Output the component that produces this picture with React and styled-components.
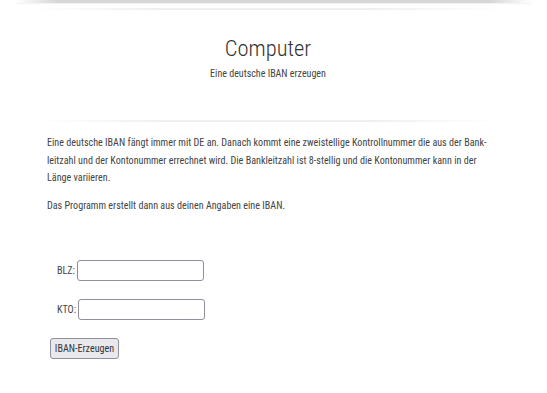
import React from "react";
import styled, { createGlobalStyle } from "styled-components";

const Global = createGlobalStyle`
  html, body { margin: 0; padding: 0; background: #fff; }
  body { font-family: "Roboto Condensed", Roboto, "Liberation Sans", sans-serif; color: #444; }
`;

const Page = styled.div`
  width: 547px;
  height: 393px;
  overflow: hidden;
  display: flex;
  flex-direction: column;
`;

const TopShade = styled.div`
  height: 3px;
  margin: 0 16px 0 16px;
  background: linear-gradient(to right, rgba(200,200,200,0), #d6d6d6 8%, #d6d6d6 92%, rgba(200,200,200,0));
  box-shadow: 0 1px 2px rgba(0,0,0,0.06);
`;

const Rule = styled.div`
  height: 2px;
  margin: ${(p) => p.$m || "0"};
  background: linear-gradient(to right, rgba(235,235,235,0), #eeeeee 30%, #eeeeee 70%, rgba(235,235,235,0));
`;

const Header = styled.header`
  display: flex;
  flex-direction: column;
  align-items: center;
  padding: 23px 11px 0 0;
  height: 102px;
  box-sizing: border-box;
`;

const Title = styled.h1`
  margin: 0;
  font-weight: 300;
  font-size: 22.5px;
  line-height: 30px;
  color: #333;
`;

const Subtitle = styled.p`
  margin: 4px 0 0;
  font-size: 10px;
  line-height: 14px;
  color: #444;
`;

const Content = styled.main`
  padding: 12px 0 0 47px;
`;

const Para = styled.p`
  margin: 0 0 10px;
  font-size: 10.1px;
  line-height: 17.5px;
  color: #444;
`;

const Form = styled.form`
  display: flex;
  flex-direction: column;
  gap: 18px;
  padding: 36px 0 0 3px;
`;

const Row = styled.label`
  display: flex;
  align-items: center;
  gap: 2px;
  padding-left: 7px;
  font-size: 10.1px;
  color: #444;
`;

const Input = styled.input`
  width: 127px;
  height: 21px;
  box-sizing: border-box;
  border: 1px solid #8f8f9d;
  border-radius: 3px;
  background: #fff;
  padding: 0 4px;
  font: inherit;
`;

const Button = styled.button`
  align-self: flex-start;
  width: 69px;
  height: 21px;
  box-sizing: border-box;
  border: 1px solid #8f8f9d;
  border-radius: 3px;
  background: #e9e9ed;
  color: #333;
  font-family: inherit;
  font-size: 10.1px;
  padding: 0;
`;

export default function App() {
  return (
    <Page>
      <Global />
      <TopShade />
      <Rule $m="5px 45px 0 28px" />
      <Header>
        <Title>Computer</Title>
        <Subtitle>Eine deutsche IBAN erzeugen</Subtitle>
      </Header>
      <Rule $m="8px 48px 0 36px" />
      <Content>
        <Para>
          Eine deutsche IBAN fängt immer mit DE an. Danach kommt eine zweistellige Kontrollnummer die aus der Bank-
          <br />
          leitzahl und der Kontonummer errechnet wird. Die Bankleitzahl ist 8-stellig und die Kontonummer kann in der
          <br />
          Länge variieren.
        </Para>
        <Para>Das Programm erstellt dann aus deinen Angaben eine IBAN.</Para>
        <Form onSubmit={(e) => e.preventDefault()}>
          <Row>
            BLZ:
            <Input type="text" />
          </Row>
          <Row>
            KTO:
            <Input type="text" />
          </Row>
          <Button type="submit">IBAN-Erzeugen</Button>
        </Form>
      </Content>
    </Page>
  );
}
